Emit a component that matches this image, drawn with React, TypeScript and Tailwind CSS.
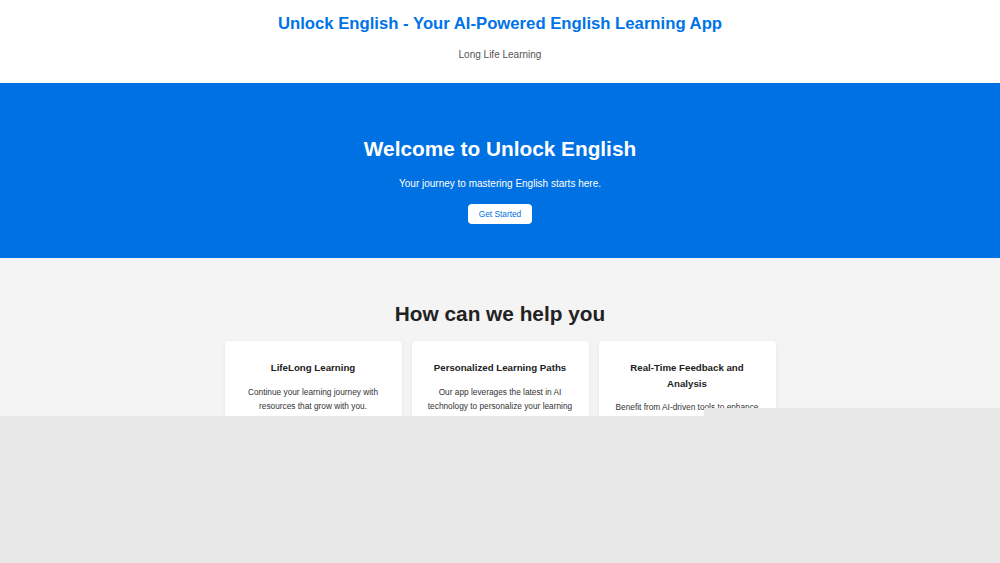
export default function App() {
  const cards = [
    {
      title: 'LifeLong Learning',
      text: 'Continue your learning journey with resources that grow with you.',
    },
    {
      title: 'Personalized Learning Paths',
      text: 'Our app leverages the latest in AI technology to personalize your learning experience, helping you to progress faster.',
    },
    {
      title: 'Real-Time Feedback and Analysis',
      text: 'Benefit from AI-driven tools to enhance your pronunciation, grammar and vocabulary in real time.',
    },
  ];

  return (
    <div className="relative h-[563px] overflow-hidden bg-[#f4f4f4] font-['Liberation_Sans',Arial,sans-serif]">
      <header className="flex h-[83px] flex-col items-center bg-white pt-[13px]">
        <h1 className="text-[16.7px] font-bold leading-[22px] text-[#0073e6]">
          Unlock English - Your AI-Powered English Learning App
        </h1>
        <p className="mt-[13px] text-[10px] leading-[14px] text-[#555]">Long Life Learning</p>
      </header>

      <section className="flex h-[175px] flex-col items-center bg-[#0071e3] pt-[53px] text-white">
        <h2 className="text-[20.8px] font-bold leading-[26px]">Welcome to Unlock English</h2>
        <p className="mt-[15px] text-[10px] leading-[14px]">Your journey to mastering English starts here.</p>
        <button className="mt-[13px] h-[20px] w-[64px] rounded-[4px] bg-white text-[8.3px] text-[#0071e3]">
          Get Started
        </button>
      </section>

      <section className="flex flex-col items-center pt-[43px]">
        <h2 className="text-[20.8px] font-bold leading-[26px] text-[#222]">How can we help you</h2>
        <div className="mt-[14px] flex gap-[10px]">
          {cards.map((card) => (
            <div
              key={card.title}
              className="w-[177px] rounded-[4px] bg-white px-[14px] pt-[19px] pb-[20px] text-center shadow-[0_1px_4px_rgba(0,0,0,0.06)]"
            >
              <h3 className="text-[9.7px] font-bold leading-[15.5px] text-[#222]">{card.title}</h3>
              <p className="mt-[9px] text-[8.3px] leading-[14px] text-[#333]">{card.text}</p>
            </div>
          ))}
        </div>
      </section>

      <div className="absolute left-0 right-0 top-[416px] bottom-0 bg-[#e8e8e8]" />
      <div className="absolute left-[704px] right-0 top-[408px] bottom-0 bg-[#e8e8e8]" />
    </div>
  );
}
